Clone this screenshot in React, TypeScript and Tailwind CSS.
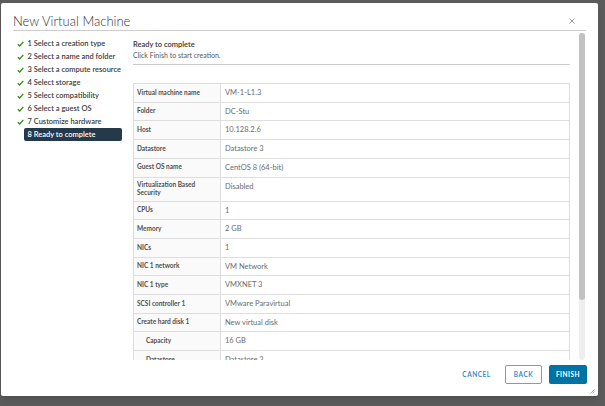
const steps = [
  '1 Select a creation type',
  '2 Select a name and folder',
  '3 Select a compute resource',
  '4 Select storage',
  '5 Select compatibility',
  '6 Select a guest OS',
  '7 Customize hardware',
  '8 Ready to complete',
]

const rows: { label: string; value: string; sub?: boolean }[] = [
  { label: 'Virtual machine name', value: 'VM-1-L1.3' },
  { label: 'Folder', value: 'DC-Stu' },
  { label: 'Host', value: '10.128.2.6' },
  { label: 'Datastore', value: 'Datastore 3' },
  { label: 'Guest OS name', value: 'CentOS 8 (64-bit)' },
  { label: 'Virtualization Based Security', value: 'Disabled' },
  { label: 'CPUs', value: '1' },
  { label: 'Memory', value: '2 GB' },
  { label: 'NICs', value: '1' },
  { label: 'NIC 1 network', value: 'VM Network' },
  { label: 'NIC 1 type', value: 'VMXNET 3' },
  { label: 'SCSI controller 1', value: 'VMware Paravirtual' },
  { label: 'Create hard disk 1', value: 'New virtual disk' },
  { label: 'Capacity', value: '16 GB', sub: true },
  { label: 'Datastore', value: 'Datastore 3', sub: true },
]

function Check() {
  return (
    <svg width="7" height="6" viewBox="0 0 7 6" className="shrink-0">
      <path d="M0.8 3.2 L2.7 5 L6.3 0.9" fill="none" stroke="#3f8a1c" strokeWidth="1.4" />
    </svg>
  )
}

export default function App() {
  return (
    <div className="h-[406px] w-[605px] overflow-hidden bg-[#5b5b5b] pl-[1px] pt-[3px] font-['Lato',sans-serif]">
      <div className="relative flex h-[393px] w-[597px] flex-col rounded-[2px] bg-white shadow-md">
        {/* Header */}
        <div className="mx-[12px] flex h-[28px] shrink-0 items-center justify-between border-b border-[#cccccc] pt-[9px]">
          <span className="text-[13px] font-light leading-[17px] text-[#313131]">New Virtual Machine</span>
          <svg width="6" height="6" viewBox="0 0 6 6" className="mr-[11px]">
            <path d="M0.5 0.5 L5.5 5.5 M5.5 0.5 L0.5 5.5" stroke="#8a8a8a" strokeWidth="0.9" />
          </svg>
        </div>

        {/* Body */}
        <div className="flex min-h-0 flex-1">
          {/* Steps */}
          <div className="w-[132px] shrink-0 pl-[16px] pt-[6px]">
            {steps.map((s, i) => {
              const active = i === steps.length - 1
              return (
                <div key={s} className="flex h-[13px] items-center">
                  <div className="flex w-[7px] justify-center">{!active && <Check />}</div>
                  <span
                    className={
                      active
                        ? 'w-[98px] rounded-[2px] bg-[#24394a] px-[3.5px] text-[7.5px] font-semibold leading-[13px] text-white'
                        : 'px-[3.5px] text-[7.5px] font-semibold leading-[13px] text-[#3a3a3a]'
                    }
                  >
                    {s}
                  </span>
                </div>
              )
            })}
          </div>

          {/* Content */}
          <div className="w-[437px] shrink-0 overflow-hidden">
            <div className="border-b border-[#cccccc] pb-[3px] pt-[8px]">
              <div className="text-[7.5px] font-semibold leading-[11px] text-[#333]">Ready to complete</div>
              <div className="text-[7px] leading-[11px] text-[#565656]">Click Finish to start creation.</div>
            </div>
            <div className="mt-[18px] border border-b-0 border-[#dddddd]">
              {rows.map((r, i) => (
                <div key={i} className="flex border-b border-[#dddddd]">
                  <div
                    className={`flex w-[87px] shrink-0 items-center border-r border-[#dddddd] bg-[#fafafa] py-[3px] pr-[3px] text-[6.5px] font-bold leading-[8.5px] text-[#4f4f4f] ${
                      r.sub ? 'pl-[12px]' : 'pl-[3px]'
                    }`}
                  >
                    {r.label}
                  </div>
                  <div className="flex-1 px-[4px] py-[4px] text-[7.5px] leading-[9.7px] text-[#6b6b6b]">{r.value}</div>
                </div>
              ))}
            </div>
          </div>

          {/* Scrollbar */}
          <div className="ml-[9px] mt-[2px] w-[6px] shrink-0 rounded-[3px] bg-[#eeeeee]">
            <div className="h-[267px] rounded-[3px] bg-[#c1c1c1]" />
          </div>
        </div>

        {/* Footer */}
        <div className="flex h-[36px] shrink-0 items-start justify-end gap-[7px] pr-[11px] pt-[5px]">
          <button className="h-[19px] w-[43px] text-[6.5px] font-bold tracking-[0.08em] text-[#3d8dc4]">CANCEL</button>
          <button className="h-[19px] w-[37px] rounded-[2px] border border-[#5aa9d6] text-[6.5px] font-bold tracking-[0.08em] text-[#3d8dc4]">
            BACK
          </button>
          <button className="h-[19px] w-[38px] rounded-[2px] bg-[#0072a3] text-[6.5px] font-bold tracking-[0.08em] text-white">
            FINISH
          </button>
        </div>

        {/* Resize grip */}
        <svg width="5" height="5" viewBox="0 0 5 5" className="absolute bottom-[2px] right-[3px]">
          <path d="M4.5 0.5 L0.5 4.5 M4.5 2.5 L2.5 4.5" stroke="#9a9a9a" strokeWidth="0.8" />
        </svg>
      </div>
    </div>
  )
}
